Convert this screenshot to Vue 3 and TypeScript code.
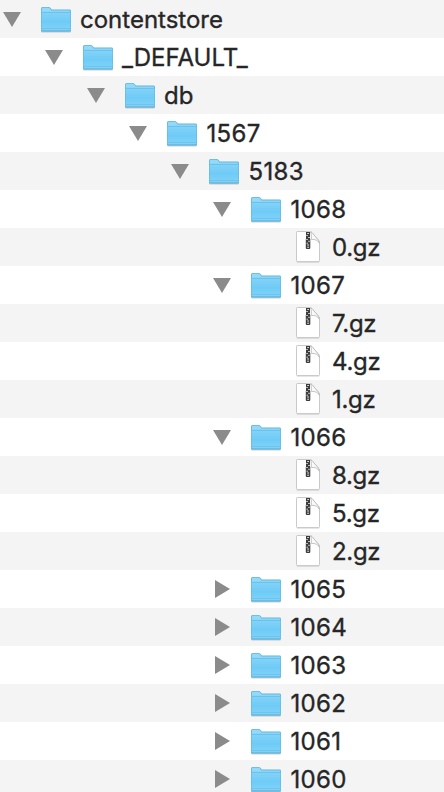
<script setup lang="ts">
interface Entry {
  name: string
  level: number
  kind: 'open' | 'closed' | 'file'
}

const folder = (name: string, level: number, open = true): Entry => ({ name, level, kind: open ? 'open' : 'closed' })
const file = (name: string): Entry => ({ name, level: 6, kind: 'file' })

const entries: Entry[] = [
  folder('contentstore', 0),
  folder('_DEFAULT_', 1),
  folder('db', 2),
  folder('1567', 3),
  folder('5183', 4),
  folder('1068', 5),
  file('0.gz'),
  folder('1067', 5),
  file('7.gz'),
  file('4.gz'),
  file('1.gz'),
  folder('1066', 5),
  file('8.gz'),
  file('5.gz'),
  file('2.gz'),
  folder('1065', 5, false),
  folder('1064', 5, false),
  folder('1063', 5, false),
  folder('1062', 5, false),
  folder('1061', 5, false),
  folder('1060', 5, false),
]

const isNumeric = (name: string): boolean => /^\d+$/.test(name)
</script>

<template>
  <svg class="defs" width="0" height="0" aria-hidden="true">
    <defs>
      <linearGradient id="folder-front" x1="0" y1="0" x2="0" y2="1">
        <stop offset="0" stop-color="#83d3f8" />
        <stop offset="0.5" stop-color="#6fcbf6" />
        <stop offset="1" stop-color="#80d3f9" />
      </linearGradient>
    </defs>
  </svg>
  <ul class="tree">
    <li v-for="entry in entries" :key="entry.name" class="row" :style="{ paddingLeft: entry.level * 42 + 'px' }">
      <span class="toggle">
        <svg v-if="entry.kind === 'open'" width="24" height="38" viewBox="0 0 24 38"><path d="M3 12H21L12 27Z" fill="#8b8b8b" /></svg>
        <svg v-else-if="entry.kind === 'closed'" width="24" height="38" viewBox="0 0 24 38"><path d="M5 10V28L20 19Z" fill="#8b8b8b" /></svg>
      </span>
      <svg v-if="entry.kind !== 'file'" class="icon" width="32" height="38" viewBox="0 0 32 38">
        <path d="M1.5 32H30.5" stroke="#000" stroke-opacity=".16" stroke-width="1.2" />
        <path d="M1 8.5Q1 7 2.5 7H8.5Q9.8 7 10.6 8L11.8 9.6H29.5Q31 9.6 31 11V30.5Q31 31.5 30 31.5H2Q1 31.5 1 30.5Z" fill="#5fb6df" />
        <path d="M1.8 12V8.6Q1.8 7.8 2.6 7.8H8.5Q9.4 7.8 10 8.6L11.4 10.4H29.5Q30.2 10.4 30.2 11.2V12Z" fill="#93dafa" />
        <path d="M1.6 12.3H30.4V30.2Q30.4 30.8 29.8 30.8H2.2Q1.6 30.8 1.6 30.2Z" fill="url(#folder-front)" />
        <path d="M1.5 12.3H30.5" stroke="#65bee6" stroke-width=".8" />
        <path d="M1.5 28.5H30.5" stroke="#6abfe6" stroke-width=".7" />
        <path d="M1.3 31H30.7" stroke="#55a6cd" stroke-width=".8" />
      </svg>
      <svg v-else class="icon" width="32" height="38" viewBox="0 0 32 38">
        <path d="M4.8 34H27.2" stroke="#000" stroke-opacity=".2" />
        <path d="M5.2 3.5H17.5Q19 3.5 20 4.6L26.6 12.4Q27.5 13.5 27.5 15V32.8Q27.5 33.5 26.8 33.5H5.2Q4.5 33.5 4.5 32.8V4.2Q4.5 3.5 5.2 3.5Z" fill="#fff" stroke="#cacaca" />
        <path d="M18.6 3.8Q19.6 5 19.3 11.3Q25.5 11.2 27.4 15.2L26.6 12.4L20 4.6Z" fill="#fafafa" stroke="#b4b4b4" stroke-width=".8" />
        <path d="M14 4H18V11H18.3V20Q18.3 21 17.3 21H14.8Q13.8 21 13.8 20V11H14Z" fill="#3c3c3c" />
        <path d="M15.2 5.5H17M14.3 7.5H15.8M16.2 9.5H17.8M14.3 11.5H15.8M16.2 13.3H17.8M14.5 15.2H16" stroke="#d8d8d8" stroke-width="1" />
        <path d="M15.2 17H17M15.2 19.2H17" stroke="#e8e8e8" stroke-width="1" />
      </svg>
      <span class="name" :class="{ numeric: isNumeric(entry.name), archive: entry.kind === 'file' }">{{ entry.name }}</span>
    </li>
  </ul>
</template>

<style>
body {
  background: #fff;
  overflow: hidden;
}
</style>

<style scoped>
.defs {
  display: block;
}
.tree {
  margin: 0;
  padding: 0;
  height: 792px;
  overflow: hidden;
  list-style: none;
  font-family: Inter, "Liberation Sans", sans-serif;
  font-size: 24px;
  color: #262626;
}
.row {
  display: flex;
  height: 38px;
  align-items: center;
  background: #fff;
}
.row:nth-child(odd) {
  background: #f4f4f4;
}
.toggle {
  width: 40px;
  height: 38px;
  flex: none;
}
.toggle svg,
.icon {
  display: block;
  flex: none;
}
.name {
  margin-left: 8px;
  padding-top: 2px;
  line-height: 36px;
  white-space: pre;
  -webkit-text-stroke: 0.35px #262626;
}
.numeric {
  margin-left: 8.5px;
  letter-spacing: 0.35px;
}
.archive {
  letter-spacing: -0.3px;
}
</style>
